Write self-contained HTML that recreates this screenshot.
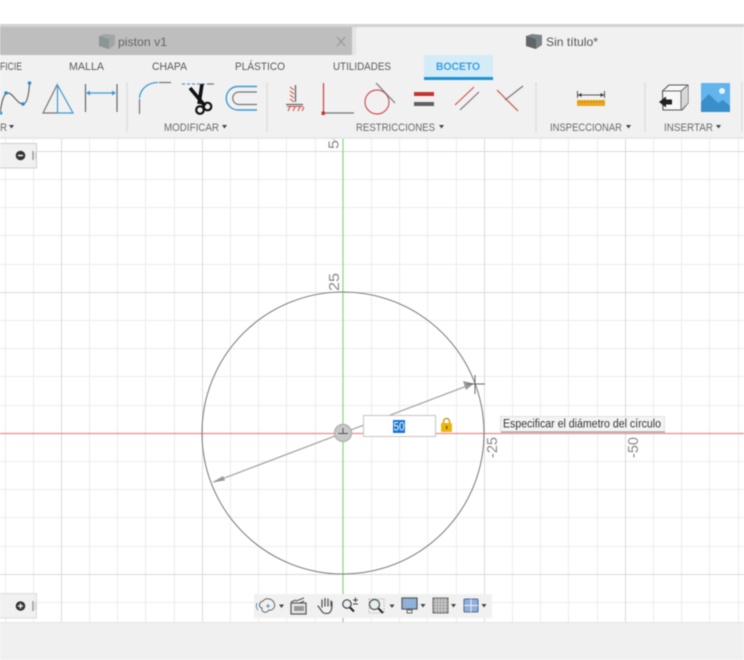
<!DOCTYPE html>
<html><head><meta charset="utf-8"><style>
html,body{margin:0;padding:0;background:#fff;width:744px;height:660px;overflow:hidden}
svg{display:block;filter:blur(.45px)}
text{font-family:"Liberation Sans",sans-serif}
</style></head><body>
<svg width="744" height="660" viewBox="0 0 744 660" xmlns="http://www.w3.org/2000/svg">
<rect width="744" height="660" fill="#fff"/>
<!-- grid -->
<g stroke="#ececec" stroke-width="1" fill="none">
<path d="M5.5 138V622M33.5 138V622M89.5 138V622M117.5 138V622M145.5 138V622M174.5 138V622M230.5 138V622M258.5 138V622M286.5 138V622M315.5 138V622M371.5 138V622M399.5 138V622M427.5 138V622M456.5 138V622M512.5 138V622M540.5 138V622M568.5 138V622M597.5 138V622M653.5 138V622M681.5 138V622M709.5 138V622M738.5 138V622"/>
<path d="M0 179.5H744M0 207.5H744M0 235.5H744M0 264.5H744M0 320.5H744M0 348.5H744M0 376.5H744M0 405.5H744M0 461.5H744M0 489.5H744M0 517.5H744M0 546.5H744M0 602.5H744"/>
</g>
<g stroke="#dadada" stroke-width="1" fill="none">
<path d="M61.5 138V622M202.5 138V622M484.5 138V622M625.5 138V622M0 151.5H744M0 292.5H744M0 574.5H744"/>
</g>
<path d="M0 433.500H744" stroke="#e68f8f" stroke-width="1.300"/>
<path d="M343 138V622" stroke="#8fd68f" stroke-width="1.300"/>
<!-- clipped top axis label -->
<text transform="translate(338.500,149) rotate(-90)" font-size="15" fill="#888" textLength="18" lengthAdjust="spacingAndGlyphs">50</text>
<!-- top chrome -->
<rect x="0" y="24" width="744" height="3.5" fill="#d2d2d2"/>
<rect x="0" y="27" width="744" height="28" fill="#e4e4e4"/>
<rect x="0" y="27" width="352" height="28" fill="#bebebe"/>
<path d="M356 55V31q0-4 4-4H744V55Z" fill="#f1f1f1"/>
<rect x="0" y="55" width="744" height="82" fill="#f1f1f1"/>
<rect x="0" y="137" width="744" height="2" fill="#e8e8e8"/>
<!-- tabs text -->
<path d="M99 36l6-2 10 1 0 10-6 4-10-3Z" fill="#a0a6a8"/><path d="M99 36l10 3v10l-10-3Z" fill="#8d9496"/>
<text x="118" y="46" font-size="12" fill="#666" textLength="49" lengthAdjust="spacingAndGlyphs">piston v1</text>
<path d="M337 37l8 9M345 37l-8 9" stroke="#999" stroke-width="1.300"/>
<path d="M526 36l6-2 10 1 0 10-6 4-10-3Z" fill="#7d8487"/><path d="M526 36l10 3v10l-10-3Z" fill="#5f6568"/>
<text x="546" y="46" font-size="12" fill="#555" textLength="52" lengthAdjust="spacingAndGlyphs">Sin título*</text>
<rect x="424" y="55" width="69" height="22" fill="#d4ecf7"/>
<rect x="424" y="77" width="69" height="3" fill="#1f94d2"/>
<g font-size="11" fill="#5a5a5a">
<text x="0" y="70" textLength="22" lengthAdjust="spacingAndGlyphs">FICIE</text>
<text x="69" y="70" textLength="35" lengthAdjust="spacingAndGlyphs">MALLA</text>
<text x="152" y="70" textLength="35" lengthAdjust="spacingAndGlyphs">CHAPA</text>
<text x="235" y="70" textLength="50" lengthAdjust="spacingAndGlyphs">PLÁSTICO</text>
<text x="333" y="70" textLength="58" lengthAdjust="spacingAndGlyphs">UTILIDADES</text>
</g>
<text x="436" y="70" font-size="11" font-weight="bold" fill="#3ba0da" textLength="44" lengthAdjust="spacingAndGlyphs">BOCETO</text>
<!-- group labels -->
<g font-size="11" fill="#6a6a6a">
<text x="0" y="131" textLength="7" lengthAdjust="spacingAndGlyphs">R</text>
<text x="164" y="131" textLength="55" lengthAdjust="spacingAndGlyphs">MODIFICAR</text>
<text x="356" y="131" textLength="79" lengthAdjust="spacingAndGlyphs">RESTRICCIONES</text>
<text x="550" y="131" textLength="72" lengthAdjust="spacingAndGlyphs">INSPECCIONAR</text>
<text x="664" y="131" textLength="49" lengthAdjust="spacingAndGlyphs">INSERTAR</text>
</g>
<g fill="#444">
<path d="M9 125h5l-2.500 3.500Z"/><path d="M222 125h5l-2.500 3.500Z"/><path d="M439 125h5l-2.500 3.500Z"/><path d="M626 125h5l-2.500 3.500Z"/><path d="M716 125h5l-2.500 3.500Z"/>
</g>
<!-- separators -->
<g stroke="#e0e0e0" stroke-width="1.500">
<path d="M127 82V132M267 82V132M536 82V132M645 82V132M742 82V132"/>
</g>
<!-- spline -->
<path d="M0 113C2 100 4 93 8 93C13 93 17 104 23 104C27 104 29 94 29.500 83" fill="none" stroke="#666" stroke-width="1.200"/>
<g fill="#2a8fd0"><circle cx="0.500" cy="113" r="1.800"/><circle cx="6" cy="93" r="1.800"/><circle cx="23" cy="104" r="1.800"/><circle cx="29.500" cy="83" r="1.800"/></g>
<!-- mirror -->
<path d="M57 85L43 113H57" fill="none" stroke="#777" stroke-width="1.200"/>
<path d="M57.500 85L73 113H57.500Z" fill="none" stroke="#3d9ad6" stroke-width="1.200"/>
<!-- dimension -->
<path d="M85.500 84V112M117 84V112" stroke="#666" stroke-width="1.200"/>
<path d="M87 93H115" stroke="#3d9ad6" stroke-width="1.200"/>
<path d="M86 93l4-2.500v5ZM116 93l-4-2.500v5Z" fill="#3d9ad6"/>
<!-- fillet -->
<path d="M139.500 98C140 89 148 82.500 158 82.500" fill="none" stroke="#3d9ad6" stroke-width="1.300"/>
<path d="M159 82.500H171M139.500 99V114" stroke="#777" stroke-width="1.200"/>
<!-- trim -->
<path d="M182 84H205" stroke="#4a9ed8" stroke-width="1.200" stroke-dasharray="3 2"/>
<path d="M207 84H214" stroke="#777" stroke-width="1.200"/>
<path d="M190 88L205 106" stroke="#111" stroke-width="3.600"/>
<path d="M202 84L199 104" stroke="#111" stroke-width="3.600"/>
<circle cx="200" cy="110" r="3.800" fill="none" stroke="#111" stroke-width="2.200"/>
<circle cx="207.500" cy="106.500" r="3.800" fill="none" stroke="#111" stroke-width="2.200"/>
<!-- offset -->
<path d="M257 86.500H238A11.500 11.500 0 0 0 238 110H257" fill="none" stroke="#3d9ad6" stroke-width="1.400"/>
<path d="M257 92H239A6 6 0 0 0 239 104.500H257" fill="none" stroke="#777" stroke-width="1.200"/>
<!-- fix -->
<path d="M295.500 85V102M286 104.500H303" stroke="#666" stroke-width="1.300"/>
<path d="M290 87l4 3M290 91l4 3M290 95l4 3M290 99l4 3M288 111l2-4M293 111l2-4M298 111l2-4M302 111l2-4" stroke="#cf4a4a" stroke-width="1"/>
<path d="M287 106.500H303" stroke="#cf4a4a" stroke-width="1"/>
<!-- perpendicular -->
<path d="M323.500 83V113" stroke="#c94343" stroke-width="1.200"/>
<path d="M324 113H354" stroke="#777" stroke-width="1.200"/>
<rect x="321.500" y="111.500" width="3.500" height="3.500" fill="#c93a3a"/>
<!-- tangent -->
<circle cx="377" cy="102" r="12" fill="none" stroke="#cf5454" stroke-width="1.200"/>
<path d="M376 83L395 103" stroke="#777" stroke-width="1.200"/>
<!-- equal -->
<rect x="414" y="92" width="20" height="4" fill="#c23535"/>
<rect x="414" y="102" width="20" height="4" fill="#5f5f5f"/>
<!-- parallel -->
<path d="M455 105L474 87" stroke="#cf5454" stroke-width="1.200"/>
<path d="M460 110L479 92" stroke="#777" stroke-width="1.200"/>
<!-- perp2 -->
<path d="M497 90L518 111" stroke="#cf5454" stroke-width="1.200"/>
<path d="M505 100L523 86" stroke="#777" stroke-width="1.200"/>
<!-- measure -->
<rect x="577" y="100" width="28" height="6" fill="#eba81f"/>
<path d="M579 101v2M582 101v2M585 101v2M588 101v2M591 101v2M594 101v2M597 101v2M600 101v2M603 101v2" stroke="#a9760f" stroke-width=".7"/>
<path d="M577.500 91V98M604.500 91V98M578 95H604" stroke="#555" stroke-width="1"/>
<path d="M578 95l3.500-2v4ZM604 95l-3.500-2v4Z" fill="#333"/>
<!-- insert -->
<path d="M662.500 91L669 85H688V103L682 110H663Z" fill="#f8f8f8" stroke="#555" stroke-width="1.100" stroke-linejoin="round"/>
<path d="M681 91L688 85V103L681 110Z" fill="#d8d8d8"/>
<path d="M662.500 91H681V110M681 91L688 85" fill="none" stroke="#666" stroke-width=".9"/>
<path d="M659 102L666 96.500V99.500H672V104.500H666V107.500Z" fill="#222"/>
<!-- image -->
<rect x="701" y="83" width="29" height="29" fill="#62b4ec"/>
<path d="M701 112V102L709 94L718 103L723 100L730 106V112Z" fill="#3b8fc8"/>
<circle cx="722" cy="91" r="3" fill="#e9f4fb"/>
<!-- left panels -->
<rect x="-2" y="143.500" width="38.500" height="24.500" fill="#f1f1f1" stroke="#cfcfcf"/>
<circle cx="20.500" cy="155.500" r="4.800" fill="#333"/><rect x="18" y="154.700" width="5" height="1.600" fill="#eee"/>
<path d="M33 151V160" stroke="#999" stroke-width="1.500"/><path d="M35.500 152V159" stroke="#ccc"/>
<rect x="-2" y="593.500" width="38.500" height="24.500" fill="#f1f1f1" stroke="#dcdcdc"/>
<circle cx="20.500" cy="606" r="4.800" fill="#333"/><path d="M18 606H23M20.500 603.500V608.500" stroke="#eee" stroke-width="1.400"/>
<path d="M33 601V611" stroke="#999" stroke-width="1.500"/><path d="M35.500 602V610" stroke="#ccc"/>
<!-- bottom -->
<rect x="0" y="622" width="744" height="38" fill="#f0f0f0"/>
<rect x="0" y="622" width="744" height="1" fill="#e4e4e4"/>
<!-- sketch -->
<circle cx="343" cy="433" r="141" fill="none" stroke="#828282" stroke-width="1.100"/>
<path d="M214 482L472 384" stroke="#a8a8a8" stroke-width="1.300"/>
<path d="M212 482.500L223 476L225 480.500ZM474 383.500L463 381L466 390Z" fill="#999"/>
<path d="M467 384H485M475 375V394" stroke="#666" stroke-width="1"/>
<circle cx="343" cy="433" r="8.500" fill="#c8c8c8" stroke="#b4b4b4" stroke-width="1.500"/>
<path d="M343 428V433M338 433.500H348" stroke="#555" stroke-width="1"/>
<!-- dim labels -->
<g font-size="15" fill="#888">
<text transform="translate(339,291) rotate(-90)" textLength="18" lengthAdjust="spacingAndGlyphs">25</text>
<text transform="translate(497,458) rotate(-90)" textLength="21" lengthAdjust="spacingAndGlyphs">-25</text>
<text transform="translate(638,458) rotate(-90)" textLength="21" lengthAdjust="spacingAndGlyphs">-50</text>
</g>
<!-- input -->
<rect x="363.500" y="415.500" width="72" height="21" fill="#fff" stroke="#c4c4c4"/>
<rect x="393" y="420" width="12" height="13" fill="#1976d2"/>
<text x="393.500" y="430.500" font-size="12" fill="#fff" textLength="11" lengthAdjust="spacingAndGlyphs">50</text>
<path d="M443.500 423V421.500a3 3 0 0 1 6 0V423" fill="none" stroke="#c9a21e" stroke-width="1.500"/>
<rect x="441" y="423" width="11" height="9" rx="1" fill="#e9b50f"/>
<rect x="446" y="426" width="1.500" height="3" fill="#6e5a10"/>
<!-- tooltip -->
<rect x="500.500" y="416.500" width="164" height="15" fill="#f4f4f4" stroke="#e2e2e2"/>
<path d="M501 432H665" stroke="#999"/>
<text x="503" y="427.500" font-size="11.500" fill="#333" textLength="158" lengthAdjust="spacingAndGlyphs">Especificar el diámetro del círculo</text>
<!-- nav bar -->
<rect x="254" y="594" width="238" height="24" fill="#f1f1f1"/>
<!-- orbit -->
<path d="M263 601C266 597 273 599 274 603C276 606 273 611 269 610C266 614 261 612 262 608C258 607 259 602 263 601Z" fill="none" stroke="#666" stroke-width="1"/>
<path d="M257 603C256 605 256 608 258 610M268 604V608M266 606H270" fill="none" stroke="#5a8fc0" stroke-width="1"/>
<path d="M279 604.500h5l-2.500 3.500Z" fill="#444"/>
<!-- look at -->
<rect x="291" y="603" width="15" height="11" fill="#e8e8e8" stroke="#555" stroke-width="1.200"/>
<rect x="294" y="606" width="10" height="5" fill="#999"/>
<path d="M291 602L296 600M296 601L304 598M300 603L304 601" stroke="#555" stroke-width="1.200"/>
<!-- pan -->
<path d="M318 606L321 610C323 614 326 614 329 613C332 611 332 607 332 602M322 607V600M325 606V598.500M328 606V599M331 606V601" fill="none" stroke="#555" stroke-width="1.300" stroke-linecap="round"/>
<!-- zoom -->
<circle cx="347" cy="604" r="4.200" fill="#e9f0f0" stroke="#444" stroke-width="1.200"/>
<path d="M350 607.500L354 611.500" stroke="#222" stroke-width="2"/>
<path d="M353 600H358M355.500 597.500V602.500M353 604H358" stroke="#444" stroke-width="1"/>
<!-- fit -->
<rect x="369" y="599" width="15" height="14" fill="none" stroke="#999" stroke-width=".8" stroke-dasharray="1.500 1.500"/>
<circle cx="374.500" cy="604.500" r="5" fill="#e3eeee" stroke="#555" stroke-width="1.200"/>
<path d="M378.500 608.500L383 613" stroke="#222" stroke-width="2"/>
<path d="M389.500 604.500h5l-2.500 3.500Z" fill="#444"/>
<!-- display -->
<rect x="402" y="598" width="15" height="11" fill="#8fb2d8" stroke="#5a5f66" stroke-width="1.300"/>
<path d="M407 610H412V613H407Z" fill="none" stroke="#666"/>
<path d="M420.500 604h5l-2.500 3.500Z" fill="#444"/>
<!-- grid icon -->
<rect x="433" y="598" width="15" height="15" fill="#a5a5a5" stroke="#666"/>
<path d="M436 598V613M439 598V613M442 598V613M445 598V613M433 601H448M433 604H448M433 607H448M433 610H448" stroke="#e0e0e0" stroke-width=".6"/>
<path d="M451 604h5l-2.500 3.500Z" fill="#444"/>
<!-- viewports -->
<rect x="464" y="599" width="14" height="13" rx="1" fill="#8fb0d8" stroke="#4f6f9a" stroke-width="1.100"/>
<path d="M471 599V612M464 605.500H478" stroke="#eef" stroke-width="1"/>
<path d="M481.500 604h5l-2.500 3.500Z" fill="#444"/>
</svg>
</body></html>
